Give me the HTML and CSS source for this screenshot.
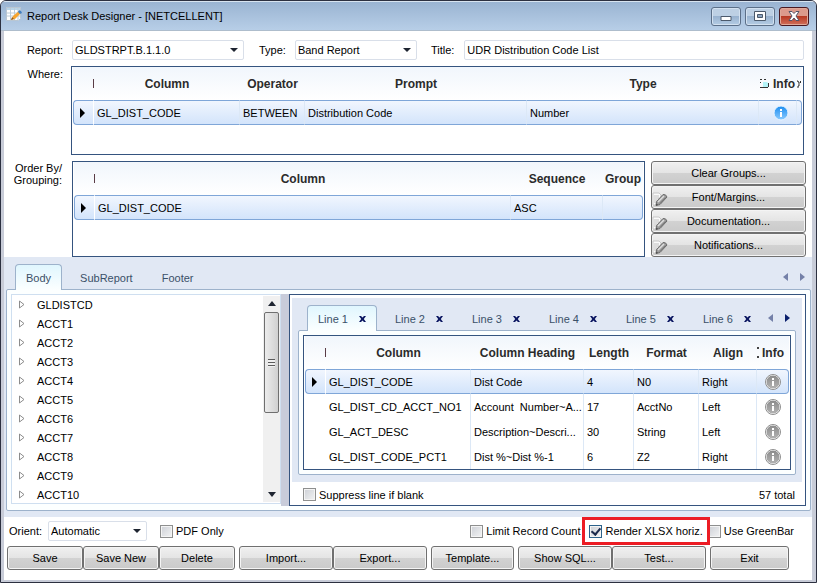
FILE: index.html
```
<!DOCTYPE html>
<html lang="en">
<head>
    <meta charset="UTF-8">
    <meta name="viewport" content="width=device-width, initial-scale=1.0">
    <title>Report Desk Designer</title>
    <link rel="stylesheet" href="styles.css">
</head>
<body>
    <svg class="sprite" aria-hidden="true">
        <defs>
            <linearGradient id="gray" x1="0" y1="0" x2="0" y2="1">
                <stop offset="0" stop-color="#8a8a8a"/>
                <stop offset="1" stop-color="#b4b4b4"/>
            </linearGradient>
            <linearGradient id="blue" x1="0" y1="0" x2="0" y2="1">
                <stop offset="0" stop-color="#1a8cf0"/>
                <stop offset="1" stop-color="#8ccbff"/>
            </linearGradient>
        </defs>
        <symbol id="edit" viewBox="0 0 16 16">
            <path d="M1 2h6l2 2v10H1z" fill="#fafafa" stroke="#c8c8c8"/>
            <path d="M2 5h5M2 7h5M2 9h3M2 11h2" stroke="#c0c0c0"/>
            <path d="M4 14.500l.5-4L11 3.500q3-.5 4 2.500L8 13.500z" fill="#9c9c9c" stroke="#6c6c6c"/>
            <path d="M6 11l6-6" stroke="#dedede" stroke-width="1.500"/>
            <path d="M8 12.500l5.500-6" stroke="#777"/>
            <path d="M4 14.500l.5-2 1.500 1.500z" fill="#444"/>
        </symbol>
        <symbol id="info" viewBox="0 0 16 16">
            <circle cx="8" cy="8" r="7" fill="url(#gray)" stroke="#fff"/>
            <circle cx="8" cy="8" r="7.5" fill="none" stroke="#8e8e8e"/>
            <path d="M7 4h2v2H7zM7 7h2v5H7z" fill="#fff"/>
        </symbol>
        <symbol id="info-on" viewBox="0 0 16 16">
            <circle cx="8" cy="8" r="7" fill="url(#blue)" stroke="#e8f4ff"/>
            <path d="M7 4h2v2H7zM7 7h2v5H7z" fill="#fff"/>
        </symbol>
        <symbol id="close" viewBox="0 0 7 6">
            <path d="M0 0h2l1.500 1.500L5 0h2L4.800 3 7 6H5L3.500 4.500 2 6H0L2.200 3z" fill="#0a1560"/>
        </symbol>
        <symbol id="expander" viewBox="0 0 6 9">
            <path d="M.5 1v7L5 4.500z" fill="#fff" stroke="#8c8c8c"/>
        </symbol>
    </svg>

    <div class="window">
        <header class="titlebar">
            <svg class="app-icon" viewBox="0 0 16 16" aria-hidden="true">
                <path d="M.5 1.500h14v11l-2 2H.5z" fill="#fff" stroke="#b9c6d2"/>
                <path d="M1 2h13v2H1z" fill="#b8d4e8"/>
                <path d="M1 7h13M1 10h13M4.500 2v12M8.500 2v12M12 2v12" stroke="#bccbd8"/>
                <path d="M5 14l2-4 6-5 2 2-6 6z" fill="#f7a531"/>
                <path d="M12 6l1-2 2 1 1 2-2 1z" fill="#3f7fc4"/>
                <path d="M5 14l1-3 2 2z" fill="#8a5a28"/>
            </svg>
            <h1>Report Desk Designer - [NETCELLENT]</h1>
            <div class="window-buttons">
                <button type="button" aria-label="Minimize"><svg viewBox="0 0 12 10"><path d="M1 5.500h10v4H1z" fill="#fff" stroke="#4c5a6c"/></svg></button>
                <button type="button" aria-label="Maximize"><svg viewBox="0 0 12 10"><path d="M.5.500h11v9H.5z" fill="#fff" stroke="#4c5a6c"/><path d="M3.500 3.500h5v3h-5z" fill="#8ba4c0" stroke="#4c5a6c"/></svg></button>
                <button type="button" class="close" aria-label="Close"><svg viewBox="0 0 12 10"><path d="M1 .5h3l2 2 2-2h3L8 5l3 4.500H8l-2-2.500-2 2.500H1L4 5z" fill="#fff" stroke="#54556a"/></svg></button>
            </div>
        </header>

        <form class="content">
            <div class="fields">
                <label for="report" class="side">Report:</label>
                <span class="select report"><select id="report"><option>GLDSTRPT.B.1.1.0</option></select></span>
                <label for="type" class="type-label">Type:</label>
                <span class="select type"><select id="type"><option>Band Report</option></select></span>
                <label for="title" class="title-label">Title:</label>
                <input type="text" id="title" value="UDR Distribution Code List">
            </div>

            <div class="where">
                <span class="side">Where:</span>
                <div class="grid-box">
                    <table>
                        <colgroup>
                            <col class="w-mark"><col class="w-name"><col class="w-operator"><col class="w-prompt"><col><col class="w-info"><col class="w-edge">
                        </colgroup>
                        <thead>
                            <tr><th class="mark"></th><th>Column</th><th>Operator</th><th>Prompt</th><th>Type</th><th class="info-head"><svg class="chip" viewBox="0 0 9 9"><path d="M3 3h4l1 1v4H3z" fill="#b4f4f8"/><path d="M0 .5h2M4 .5h2M0 3.500h1M0 8.500h8M8.500 4v4" stroke="#333"/></svg>Info</th><th class="edge"><svg viewBox="0 0 4 8"><path d="M0 1h1v1h1v2M3.500 1v2M2 4v2H1v2" fill="none" stroke="#333"/></svg></th></tr>
                        </thead>
                        <tbody>
                            <tr class="selected"><td class="arrow"></td><td>GL_DIST_CODE</td><td>BETWEEN</td><td>Distribution Code</td><td>Number</td><td class="info info-wide"><svg><use href="#info-on"/></svg></td><td></td></tr>
                        </tbody>
                    </table>
                </div>
            </div>

            <div class="order">
                <span class="side">Order By/<br>Grouping:</span>
                <div class="grid-box">
                    <table>
                        <colgroup>
                            <col class="w-mark"><col><col class="w-sequence"><col class="w-group">
                        </colgroup>
                        <thead>
                            <tr><th class="mark"></th><th>Column</th><th>Sequence</th><th>Group</th></tr>
                        </thead>
                        <tbody>
                            <tr class="selected"><td class="arrow"></td><td>GL_DIST_CODE</td><td>ASC</td><td></td></tr>
                        </tbody>
                    </table>
                </div>
                <div class="side-buttons">
                    <button type="button" class="btn">Clear Groups...</button>
                    <button type="button" class="btn"><svg><use href="#edit"/></svg>Font/Margins...</button>
                    <button type="button" class="btn"><svg><use href="#edit"/></svg>Documentation...</button>
                    <button type="button" class="btn"><svg><use href="#edit"/></svg>Notifications...</button>
                </div>
            </div>

            <section class="bands">
                <nav class="tabs">
                    <a href="#body" class="tab active">Body</a>
                    <a href="#subreport" class="tab">SubReport</a>
                    <a href="#footer" class="tab">Footer</a>
                    <button type="button" class="scroll-tab prev" aria-label="Previous"></button>
                    <button type="button" class="scroll-tab next" aria-label="Next"></button>
                </nav>
                <div class="panel split">
                    <div class="tree">
                        <ul>
                            <li><svg><use href="#expander"/></svg>GLDISTCD</li>
                            <li><svg><use href="#expander"/></svg>ACCT1</li>
                            <li><svg><use href="#expander"/></svg>ACCT2</li>
                            <li><svg><use href="#expander"/></svg>ACCT3</li>
                            <li><svg><use href="#expander"/></svg>ACCT4</li>
                            <li><svg><use href="#expander"/></svg>ACCT5</li>
                            <li><svg><use href="#expander"/></svg>ACCT6</li>
                            <li><svg><use href="#expander"/></svg>ACCT7</li>
                            <li><svg><use href="#expander"/></svg>ACCT8</li>
                            <li><svg><use href="#expander"/></svg>ACCT9</li>
                            <li><svg><use href="#expander"/></svg>ACCT10</li>
                        </ul>
                        <div class="scrollbar">
                            <span class="up"></span>
                            <span class="thumb"></span>
                            <span class="down"></span>
                        </div>
                    </div>
                    <div class="splitter"></div>
                    <div class="lines">
                        <div class="lines-area">
                            <nav class="tabs">
                                <a href="#line1" class="tab active">Line 1 <svg><use href="#close"/></svg></a>
                                <a href="#line2" class="tab">Line 2 <svg><use href="#close"/></svg></a>
                                <a href="#line3" class="tab">Line 3 <svg><use href="#close"/></svg></a>
                                <a href="#line4" class="tab">Line 4 <svg><use href="#close"/></svg></a>
                                <a href="#line5" class="tab">Line 5 <svg><use href="#close"/></svg></a>
                                <a href="#line6" class="tab">Line 6 <svg><use href="#close"/></svg></a>
                                <button type="button" class="scroll-tab prev" aria-label="Previous line"></button>
                                <button type="button" class="scroll-tab next dark" aria-label="Next line"></button>
                            </nav>
                            <div class="panel">
                                <div class="grid-box">
                                    <table class="line-table">
                                        <colgroup>
                                            <col class="w-mark"><col><col class="w-heading"><col class="w-length"><col class="w-format"><col class="w-align"><col class="w-line-info">
                                        </colgroup>
                                        <thead>
                                            <tr><th class="mark"></th><th>Column</th><th>Column Heading</th><th>Length</th><th>Format</th><th>Align</th><th class="dots">Info</th></tr>
                                        </thead>
                                        <tbody>
                                            <tr class="selected"><td class="arrow"></td><td>GL_DIST_CODE</td><td>Dist Code</td><td>4</td><td>N0</td><td>Right</td><td class="info"><svg><use href="#info"/></svg></td></tr>
                                            <tr><td></td><td>GL_DIST_CD_ACCT_NO1</td><td>Account&nbsp; Number~A...</td><td>17</td><td>AcctNo</td><td>Left</td><td class="info"><svg><use href="#info"/></svg></td></tr>
                                            <tr><td></td><td>GL_ACT_DESC</td><td>Description~Descri...</td><td>30</td><td>String</td><td>Left</td><td class="info"><svg><use href="#info"/></svg></td></tr>
                                            <tr><td></td><td>GL_DIST_CODE_PCT1</td><td>Dist %~Dist %-1</td><td>6</td><td>Z2</td><td>Right</td><td class="info"><svg><use href="#info"/></svg></td></tr>
                                        </tbody>
                                    </table>
                                </div>
                            </div>
                        </div>
                        <div class="lines-footer">
                            <label class="check"><input type="checkbox">Suppress line if blank</label>
                            <span>57 total</span>
                        </div>
                    </div>
                </div>
            </section>

            <div class="options">
                <label for="orient">Orient:</label>
                <span class="select orient"><select id="orient"><option>Automatic</option></select></span>
                <label class="check"><input type="checkbox">PDF Only</label>
                <div class="options-right">
                    <label class="check"><input type="checkbox">Limit Record Count</label>
                    <label class="check highlight"><input type="checkbox" checked>Render XLSX horiz.</label>
                    <label class="check"><input type="checkbox">Use GreenBar</label>
                </div>
            </div>

            <footer class="actions">
                <div class="group three">
                    <button type="button" class="btn">Save</button>
                    <button type="button" class="btn">Save New</button>
                    <button type="button" class="btn">Delete</button>
                </div>
                <div class="group two">
                    <button type="button" class="btn">Import...</button>
                    <button type="button" class="btn">Export...</button>
                </div>
                <div class="group template">
                    <button type="button" class="btn">Template...</button>
                </div>
                <div class="group two">
                    <button type="button" class="btn">Show SQL...</button>
                    <button type="button" class="btn">Test...</button>
                </div>
                <div class="group exit">
                    <button type="button" class="btn">Exit</button>
                </div>
            </footer>
        </form>
    </div>
</body>
</html>
```
FILE: styles.css
```
* {
    box-sizing: border-box;
}
body {
    margin: 0;
    background: #fff;
    color: #000;
    font-family: "Liberation Sans", Arial, sans-serif;
    font-size: 11px;
    line-height: 12px;
}
button,
select,
input {
    font: inherit;
    color: inherit;
    margin: 0;
}
.sprite {
    position: absolute;
    width: 0;
    height: 0;
}

/* window frame */
.window {
    display: flex;
    flex-direction: column;
    min-height: 100vh;
    border: 1px solid #2c3040;
    border-radius: 6px 6px 0 0;
    background: #c8ccd8;
    overflow: hidden;
}
.titlebar {
    display: flex;
    align-items: center;
    height: 30px;
    padding: 0 7px 0 5px;
    border-top: 1px solid #d8e4f0;
    border-bottom: 1px solid #aebdcc;
    background: linear-gradient(#9ab4d2, #b7cee7);
}
.app-icon {
    width: 16px;
    height: 16px;
    margin-bottom: 4px;
}
.titlebar h1 {
    flex: 1;
    margin: 0 0 0 5px;
    font-size: 11px;
    font-weight: normal;
}
.window-buttons {
    display: flex;
    gap: 4px;
}
.window-buttons button {
    display: flex;
    align-items: center;
    justify-content: center;
    width: 30px;
    height: 19px;
    padding: 0;
    border: 1px solid #5b6f88;
    border-radius: 3px;
    box-shadow: inset 0 0 0 1px #d3e1f0;
    background: linear-gradient(#bdd0e4 50%, #99b3d0 50%, #b4cce4);
}
.window-buttons svg {
    width: 12px;
    height: 10px;
}
.window-buttons .close {
    border-color: #4a1820;
    box-shadow: inset 0 0 0 1px #e0a898;
    background: linear-gradient(#dc9a8c 50%, #b83a24 50%, #d0705c);
}
.content {
    display: flex;
    flex: 1;
    flex-direction: column;
    margin: 0 4px 2px 3px;
    padding-top: 9px;
    background: #fff;
}

/* fields */
.side {
    flex: none;
    width: 59px;
    text-align: right;
}
.fields {
    display: flex;
    align-items: center;
    height: 20px;
    padding-right: 8px;
}
.select {
    position: relative;
    display: block;
}
.select::after {
    content: "";
    position: absolute;
    top: 8px;
    right: 6px;
    border: 4px solid transparent;
    border-top-color: #1e2430;
    border-bottom: 0;
    pointer-events: none;
}
select,
input[type="text"] {
    display: block;
    width: 100%;
    height: 20px;
    padding: 0 2px;
    border: 1px solid #d9dfe9;
    border-radius: 2px;
    background: #fff;
    appearance: none;
}
.fields .report {
    width: 172px;
    margin-left: 9px;
}
.type-label {
    margin: 0 9px 0 15px;
}
.fields .type {
    width: 122px;
}
.title-label {
    margin: 0 10px 0 14px;
}
.fields input {
    flex: 1;
}

/* grids */
.grid-box {
    flex: 1;
    min-width: 0;
    padding: 0 1px;
    border: 1px solid #35547f;
    background: #fff;
}
.where {
    display: flex;
    margin-top: 6px;
    padding-right: 8px;
}
.where .side,
.order .side {
    margin-right: 8px;
}
.where .side {
    padding-top: 2px;
}
.where .grid-box {
    height: 89px;
}
.order {
    display: flex;
    margin-top: 6px;
    padding-right: 6px;
}
.order .side {
    padding: 1px 2px 0 0;
    width: 60px;
}
.order .grid-box {
    height: 96px;
}
table {
    width: 100%;
    table-layout: fixed;
    border-collapse: separate;
    border-spacing: 0;
}
thead {
    background: linear-gradient(#f1f6fc, #fff);
}
th {
    height: 33px;
    padding: 0;
    color: #2b2b2b;
    font-size: 12px;
    white-space: nowrap;
}
td {
    height: 25px;
    padding: 0 3px;
    border-right: 1px solid #dce8f6;
    overflow: hidden;
    white-space: nowrap;
}
td:first-child {
    border-right-color: #fff;
}
td:last-child {
    border-right: 0;
}
.mark {
    text-align: right;
}
.mark::after {
    content: "";
    display: inline-block;
    width: 1px;
    height: 9px;
    background: #5a3c46;
}
.selected td {
    border-top: 1px solid #7fa6d8;
    border-bottom: 1px solid #7fa6d8;
    background: linear-gradient(#f1f6fe, #d3e4fb);
}
.selected td:first-child {
    border-left: 1px solid #7fa6d8;
    border-radius: 4px 0 0 4px;
}
.selected td:last-child {
    border-right: 1px solid #7fa6d8;
    border-radius: 0 4px 4px 0;
}
.arrow::after {
    content: "";
    display: block;
    width: 0;
    margin-left: 3px;
    border: 5px solid transparent;
    border-left: 5px solid #000;
    border-right: 0;
}
td.info {
    padding: 0;
    text-align: center;
}
td.info-wide {
    padding-left: 6px;
}
.info svg {
    display: block;
    width: 16px;
    height: 16px;
    margin: 0 auto;
}
.info-head {
    padding-right: 2px;
    text-align: right;
}
.chip {
    width: 9px;
    height: 9px;
    margin-right: 4px;
}
.edge svg {
    display: block;
    width: 4px;
    height: 8px;
}
.dots {
    background: radial-gradient(circle at 1px 12px, #444 1px, transparent 1px), radial-gradient(circle at 1px 21px, #444 1px, transparent 1px);
}
.w-mark {
    width: 21px;
}
.w-name {
    width: 146px;
}
.w-operator {
    width: 65px;
}
.w-prompt {
    width: 222px;
}
.w-info {
    width: 38px;
}
.w-edge {
    width: 5px;
}
.w-sequence {
    width: 92px;
}
.w-group {
    width: 40px;
}
.w-heading {
    width: 113px;
}
.w-length {
    width: 50px;
}
.w-format {
    width: 65px;
}
.w-align {
    width: 58px;
}
.w-line-info {
    width: 32px;
}

/* buttons */
.btn {
    position: relative;
    height: 24px;
    padding: 0;
    border: 1px solid #707070;
    border-radius: 3px;
    box-shadow: inset 0 0 0 1px #f4f4f4;
    background: linear-gradient(#f0f0f0, #e4e4e4 50%, #d2d2d2 50%, #cacaca);
}
.btn svg {
    position: absolute;
    top: 5px;
    left: 0;
    width: 16px;
    height: 16px;
}
.side-buttons {
    display: flex;
    flex-direction: column;
    width: 155px;
    margin-left: 6px;
}

/* tabs */
.bands {
    display: flex;
    flex: 1;
    flex-direction: column;
    padding: 7px 1px 6px 2px;
    background: #e1e8f4;
}
.tabs {
    display: flex;
    height: 26px;
    margin-bottom: -1px;
    padding: 0 6px 0 9px;
}
.tab {
    position: relative;
    display: flex;
    align-items: center;
    height: 26px;
    padding: 0 10px;
    border: 1px solid transparent;
    border-bottom: 0;
    border-radius: 4px 4px 0 0;
    color: #3a5068;
    text-decoration: none;
}
.tab + .tab {
    margin-left: 7px;
}
.tab.active {
    border-color: #9db2cb;
    background: linear-gradient(#e0f6fe, #fcffff);
}
.tab svg {
    width: 7px;
    height: 6px;
    margin-left: 11px;
}
.scroll-tab {
    width: 5px;
    margin: 0 0 0 12px;
    padding: 0;
    border: 0;
    background: none;
}
.scroll-tab.prev {
    margin-left: auto;
}
.scroll-tab::after {
    content: "";
    display: block;
    width: 0;
    border: 4px solid transparent;
}
.scroll-tab.prev::after {
    border-left: 0;
    border-right: 5px solid #7480a8;
}
.scroll-tab.next::after {
    border-right: 0;
    border-left: 5px solid #7480a8;
}
.scroll-tab.dark::after {
    border-left-color: #0a1f6c;
}
.panel {
    padding: 4px;
    border: 1px solid #9db2cb;
    border-radius: 2px;
    background: #fcffff;
}
.split {
    display: flex;
    flex: 1;
}

/* tree */
.tree {
    display: flex;
    width: 270px;
    height: 210px;
    border: 1px solid #cfdff0;
    background: #fff;
    overflow: hidden;
}
.tree ul {
    flex: 1;
    margin: 0;
    padding: 0 0 0 7px;
    list-style: none;
}
.tree li {
    display: flex;
    align-items: center;
    height: 19px;
}
.tree svg {
    width: 6px;
    height: 9px;
    margin-right: 12px;
}
.scrollbar {
    display: flex;
    flex-direction: column;
    align-items: center;
    width: 17px;
    margin: 1px 0;
    background: #f0f0f0;
}
.scrollbar .up,
.scrollbar .down {
    border: 4px solid transparent;
}
.scrollbar .up {
    margin: 5px 0 6px;
    border-top: 0;
    border-bottom: 5px solid #1e2430;
}
.scrollbar .down {
    margin: auto 0 5px;
    border-bottom: 0;
    border-top: 5px solid #1e2430;
}
.scrollbar .thumb {
    display: flex;
    align-items: center;
    justify-content: center;
    width: 15px;
    height: 101px;
    border: 1px solid #6f6f6f;
    border-radius: 2px;
    background: linear-gradient(90deg, #ececec, #d0d0d0);
}
.thumb::after {
    content: "";
    width: 7px;
    height: 8px;
    background: repeating-linear-gradient(#5c5c5c 0 1px, #f0f0f0 1px 3px);
}
.splitter {
    width: 8px;
    background: #c8ccda;
}

/* lines */
.lines {
    display: flex;
    flex: 1;
    flex-direction: column;
    min-width: 0;
    padding: 3px 3px 0 2px;
    border: 1px solid #35547f;
    background: #fff;
}
.lines-area {
    padding: 7px 6px;
    background: #e1e8f4;
}
.lines-footer {
    display: flex;
    align-items: center;
    justify-content: space-between;
    flex: 1;
    padding: 2px 7px 0 11px;
}

/* options */
.check {
    display: flex;
    align-items: center;
    gap: 3px;
}
.check input {
    display: flex;
    align-items: center;
    justify-content: center;
    width: 13px;
    height: 13px;
    border: 1px solid #8e8f8f;
    box-shadow: inset 0 0 0 1px #f4f4f4;
    background: linear-gradient(135deg, #cdd0d6, #f2f3f4);
    appearance: none;
}
.check input:checked {
    border-color: #2c628b;
}
.check input:checked::after {
    content: "";
    width: 4px;
    height: 7px;
    margin-bottom: 2px;
    border: solid #1c2a4c;
    border-width: 0 2px 2px 0;
    transform: rotate(40deg);
}
.options {
    display: flex;
    align-items: center;
    margin-top: 4px;
    padding: 0 18px 0 5px;
}
.options .orient {
    width: 99px;
    margin: 0 13px 0 6px;
}
.options-right {
    display: flex;
    gap: 5px;
    margin-left: auto;
}
.highlight {
    position: relative;
    z-index: 1;
    margin-left: 4px;
}
.highlight::after {
    content: "";
    position: absolute;
    inset: -8px -7px -7px;
    border: 3px solid #ec1c24;
}

/* actions */
.actions {
    display: flex;
    gap: 4px;
    margin-top: 5px;
    padding: 0 23px 10px 3px;
}
.group {
    display: flex;
}
.group .btn {
    flex: 1;
}
.three {
    flex: 228;
}
.two {
    flex: 188;
}
.template {
    flex: 83;
}
.exit {
    flex: 79;
}
```
